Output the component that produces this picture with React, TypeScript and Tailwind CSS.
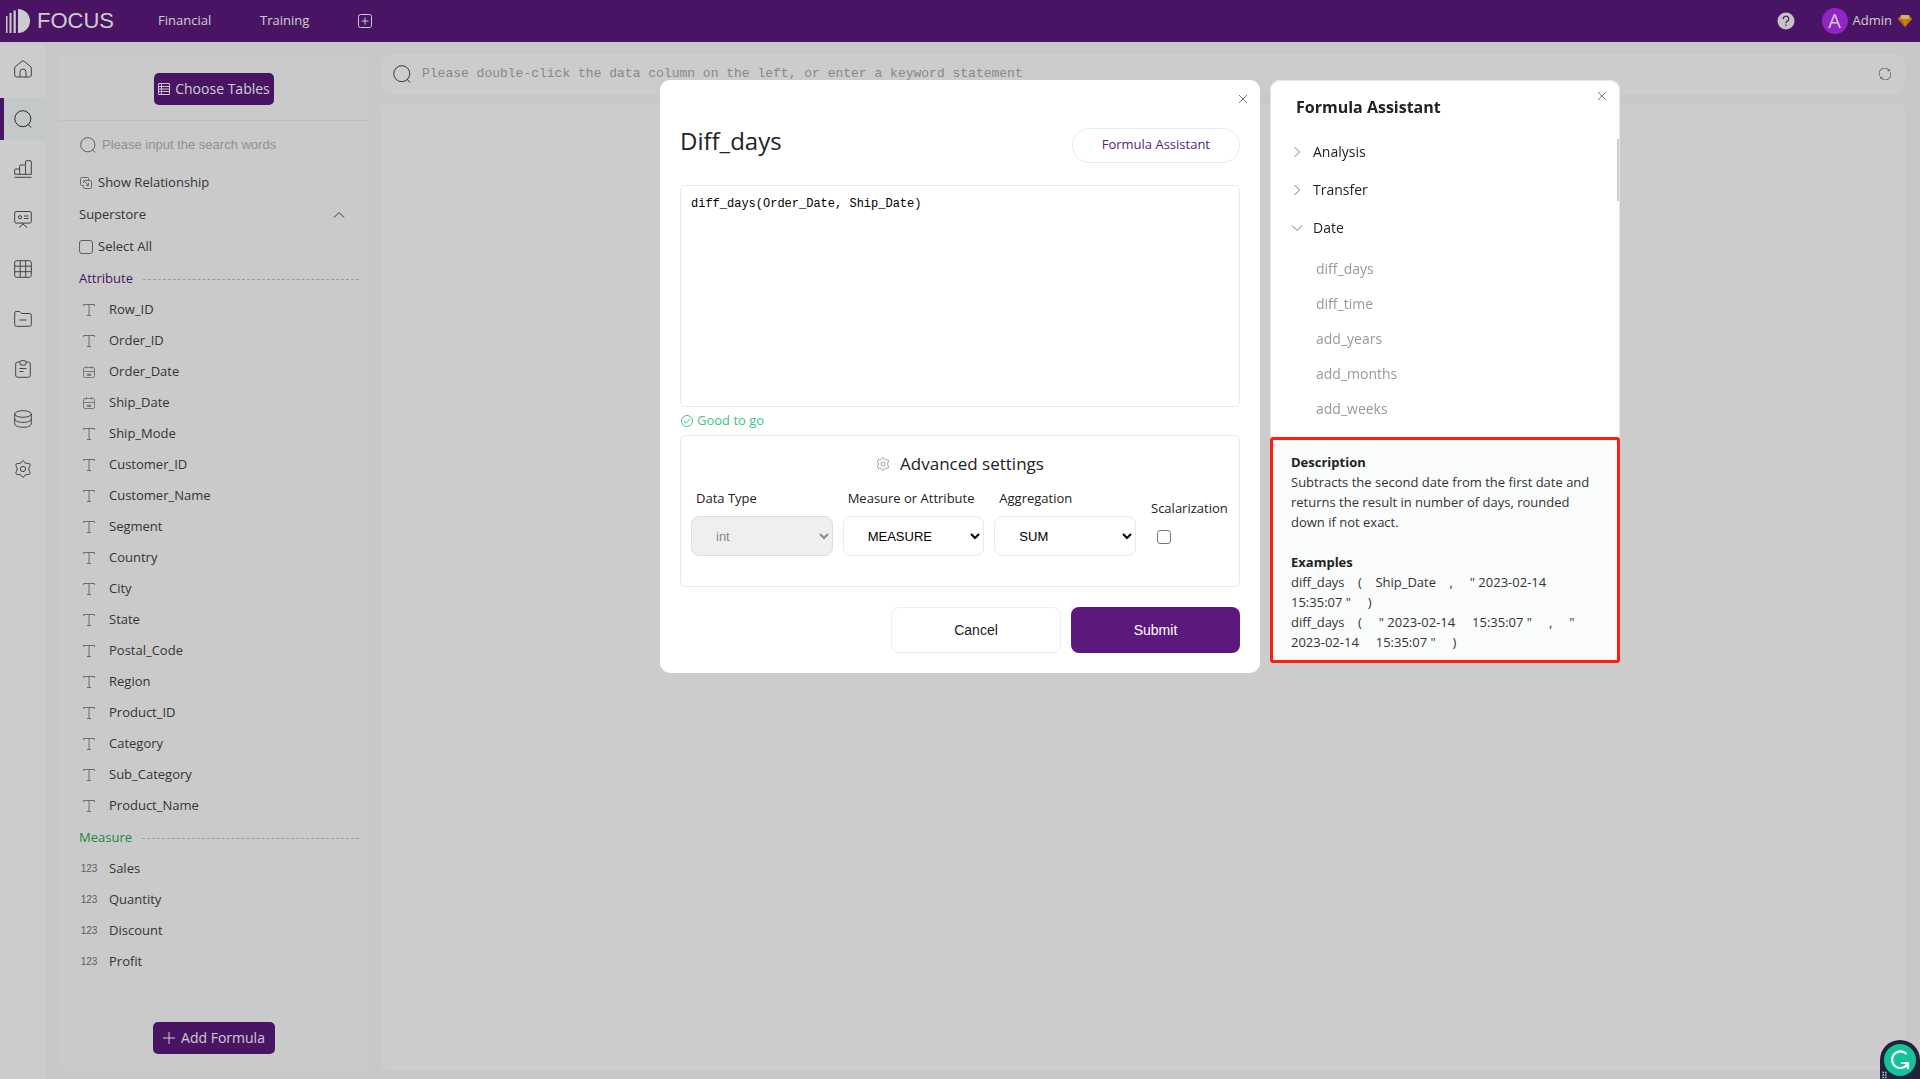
import { useState } from "react";
import clsx from "clsx";

type IconProps = { className?: string };

type Field = { name: string; kind: "text" | "date" | "number" };

const attributes: Field[] = [
  { name: "Row_ID", kind: "text" },
  { name: "Order_ID", kind: "text" },
  { name: "Order_Date", kind: "date" },
  { name: "Ship_Date", kind: "date" },
  { name: "Ship_Mode", kind: "text" },
  { name: "Customer_ID", kind: "text" },
  { name: "Customer_Name", kind: "text" },
  { name: "Segment", kind: "text" },
  { name: "Country", kind: "text" },
  { name: "City", kind: "text" },
  { name: "State", kind: "text" },
  { name: "Postal_Code", kind: "text" },
  { name: "Region", kind: "text" },
  { name: "Product_ID", kind: "text" },
  { name: "Category", kind: "text" },
  { name: "Sub_Category", kind: "text" },
  { name: "Product_Name", kind: "text" },
];

const measures: Field[] = [
  { name: "Sales", kind: "number" },
  { name: "Quantity", kind: "number" },
  { name: "Discount", kind: "number" },
  { name: "Profit", kind: "number" },
];

const dateFunctions = [
  "diff_days",
  "diff_time",
  "add_years",
  "add_months",
  "add_weeks",
];

function Svg({
  className,
  size = 18,
  children,
}: IconProps & { size?: number; children: React.ReactNode }) {
  return (
    <svg
      className={clsx("shrink-0", className)}
      viewBox={`0 0 ${size} ${size}`}
      fill="none"
      stroke="currentColor"
      aria-hidden="true"
    >
      {children}
    </svg>
  );
}

function HomeIcon({ className }: IconProps) {
  return (
    <Svg className={className}>
      <path d="M.7 7.2 8 1.2q1-.8 2 0l7.3 6V15a2 2 0 0 1-2 2H2.700a2 2 0 0 1-2-2z" />
      <path d="M6 17v-5a3 3 0 0 1 6 0v5" />
    </Svg>
  );
}

function SearchIcon({ className }: IconProps) {
  return (
    <Svg className={className}>
      <circle cx="8.800" cy="8.700" r="8" />
      <path d="m13.800 14.200 3.400 3.300" />
    </Svg>
  );
}

function ChartIcon({ className }: IconProps) {
  return (
    <Svg className={className}>
      <path d="M.7 14.300V10q0-1 1-1h4v5.300M5.700 9V6q0-1 1-1h3.800q1 0 1 1v8.300M11.500 5V1.700q0-1 1-1h3.800q1 0 1 1v12.600H.7M.5 17.300h17" />
    </Svg>
  );
}

function BoardIcon({ className }: IconProps) {
  return (
    <Svg className={className}>
      <rect x=".7" y="1.500" width="16.600" height="11.600" rx="1.500" />
      <circle cx="6" cy="7.200" r="1.600" />
      <path d="M10 6h4.500M10 8.500h4.500M9 13v2M9 14l-4 3.500M9 14l4 3.500" />
    </Svg>
  );
}

function GridIcon({ className }: IconProps) {
  return (
    <Svg className={className}>
      <rect x=".7" y=".7" width="16.600" height="16.600" rx="2" />
      <path d="M.7 6.200h16.600M.7 11.700h16.600M6.200.7v16.600M11.700.7v16.600" />
    </Svg>
  );
}

function FolderIcon({ className }: IconProps) {
  return (
    <Svg className={className}>
      <path d="M.7 14.500V3q0-1.500 1.500-1.500h3.500l2 2h7.800q1.800 0 1.800 1.800v9.200q0 1.800-1.800 1.800H2.500q-1.800 0-1.800-1.800zM5.500 10h7" />
    </Svg>
  );
}

function ClipboardIcon({ className }: IconProps) {
  return (
    <Svg className={className}>
      <path d="M6 2H3.700q-2 0-2 2v11.300q0 2 2 2h10.600q2 0 2-2V4q0-2-2-2H12M6 1.500 7 .7h4l1 .8V4q0 1-1 1H7Q6 5 6 4zM5.500 8.500h7M5.500 11.500h4" />
    </Svg>
  );
}

function DatabaseIcon({ className }: IconProps) {
  return (
    <Svg className={className}>
      <ellipse cx="9" cy="4" rx="8.300" ry="3.300" />
      <path d="M.7 4v9.800c0 1.900 3.700 3.500 8.300 3.500s8.300-1.600 8.300-3.500V4M.7 9c0 1.900 3.700 3.400 8.300 3.400s8.300-1.500 8.300-3.400" />
    </Svg>
  );
}

function GearIcon({ className }: IconProps) {
  return (
    <Svg className={className}>
      <path d="M7.500 1.800q1.500-2.200 3 0l.9 1.500 2 .2c2.700-.2 3.400 1 2.200 3.200L14.700 9l.9 2.300c1.200 2.200.5 3.400-2.200 3.200l-2 .2-.9 1.500q-1.500 2.200-3 0l-.9-1.500-2-.2c-2.700.2-3.400-1-2.200-3.200L3.300 9l-.9-2.300c-1.200-2.200-.5-3.400 2.200-3.200l2-.2z" />
      <circle cx="9" cy="9" r="2.600" />
    </Svg>
  );
}

function CloseIcon({ className }: IconProps) {
  return (
    <Svg className={className} size={10}>
      <path d="m1 1 8 8M9 1 1 9" />
    </Svg>
  );
}

function ChevronIcon({ className }: IconProps) {
  return (
    <Svg className={className} size={12}>
      <path d="m3.500 1 5 5-5 5" />
    </Svg>
  );
}

function FieldIcon({ kind }: { kind: Field["kind"] }) {
  if (kind === "number") {
    return (
      <span className="w-5 text-center font-['Liberation_Sans',sans-serif] text-[10px] text-[#777]">
        123
      </span>
    );
  }
  if (kind === "date") {
    return (
      <Svg className="mx-1 size-3 text-[#999]" size={12}>
        <path d="M2 1.500h8q1.500 0 1.500 1.500v7q0 1.500-1.500 1.500H2Q.5 11.500.5 10V3q0-1.500 1.500-1.500zM.5 5.500h11M3.500 0v2.500M8.500 0v2.500M4 7.500l1.200 2 .9-2 .9 2 1.200-2M4 9.500h4" />
      </Svg>
    );
  }
  return (
    <Svg className="mx-1 size-3 text-[#888]" size={12}>
      <path d="M.5 2v-1.500h11V2M6 .5v11M4 11.500h4" />
    </Svg>
  );
}

function Header() {
  return (
    <header className="flex h-[42px] shrink-0 items-center bg-[#5c197d] text-[13px] text-white">
      <a href="#" className="flex w-[158px] items-center gap-[7px] pl-1.5">
        <svg viewBox="0 0 24 24" className="size-6" fill="currentColor">
          <path d="M0 7h1.500v17H0zM3.500 4h2v20h-2zM7.500 1.500h2.300V24H7.500zM12 0a12 12 0 0 1 0 24z" />
        </svg>
        <span className="font-['Liberation_Sans',sans-serif] text-[22px] leading-6">
          FOCUS
        </span>
      </a>
      <nav className="flex flex-1 items-center">
        <a href="#" className="w-[102px]">
          Financial
        </a>
        <a href="#" className="w-[98px]">
          Training
        </a>
        <button type="button" aria-label="Add page">
          <Svg className="size-3.5" size={14}>
            <rect x=".5" y=".5" width="13" height="13" rx="2" />
            <path d="M7 3.500v7M3.500 7h7" />
          </Svg>
        </button>
      </nav>
      <div className="flex items-center pr-2">
        <button type="button" aria-label="Help" className="mr-[27px]">
          <svg viewBox="0 0 18 18" className="size-[18px]" fill="none">
            <circle cx="9" cy="9" r="8.500" fill="#f4f4f4" />
            <path
              d="M6.300 7a2.700 2.700 0 1 1 4 2.300Q9 10 9 11.300M9 12.600v1.400"
              stroke="#5c197d"
              strokeWidth="1.200"
            />
          </svg>
        </button>
        <span className="flex size-[26px] items-center justify-center rounded-full bg-[#b82df5] text-xl leading-none">
          A
        </span>
        <span className="mr-1.5 ml-[5px]">Admin</span>
        <svg viewBox="0 0 14 14" className="size-3.5">
          <path d="M3 1h8l3 4-7 8-7-8z" fill="#f3a712" />
          <path d="M3.500 1h7L11 5H3z" fill="#ffe2a0" />
          <path d="M0 5h4l3 8z" fill="#e07d10" />
          <path d="M14 5h-4l-3 8z" fill="#e99012" />
        </svg>
      </div>
    </header>
  );
}

const sideItems = [
  { label: "Home", Icon: HomeIcon },
  { label: "Search", Icon: SearchIcon },
  { label: "Charts", Icon: ChartIcon },
  { label: "Dashboards", Icon: BoardIcon },
  { label: "Tables", Icon: GridIcon },
  { label: "Resources", Icon: FolderIcon },
  { label: "Tasks", Icon: ClipboardIcon },
  { label: "Data", Icon: DatabaseIcon },
  { label: "Settings", Icon: GearIcon },
];

function SideNav() {
  return (
    <nav className="mt-0.5 flex w-[45px] shrink-0 flex-col bg-white text-[#555]">
      {sideItems.map(({ label, Icon }) => (
        <button
          key={label}
          type="button"
          aria-label={label}
          className={clsx(
            "flex h-[50px] items-center justify-center border-y-4 border-white",
            label === "Search" &&
              "bg-[#f7fafa] text-[#333] shadow-[inset_4px_0_0_#5c197d]",
          )}
        >
          <Icon className="size-[18px]" />
        </button>
      ))}
    </nav>
  );
}

function FieldGroup({
  title,
  fields,
  className,
}: {
  title: string;
  fields: Field[];
  className: string;
}) {
  return (
    <section>
      <div className="flex h-8 items-center gap-2.5 pt-0.5">
        <h3 className={className}>{title}</h3>
        <span className="flex-1 border-t border-dashed border-[#c4c4c4]" />
      </div>
      <ul>
        {fields.map((field) => (
          <li key={field.name} className="flex h-[31px] items-center gap-2.5">
            <FieldIcon kind={field.kind} />
            {field.name}
          </li>
        ))}
      </ul>
    </section>
  );
}

function DataPanel() {
  return (
    <aside className="mt-[15px] mb-[9px] flex w-[310px] shrink-0 flex-col bg-[#fdfdfd] text-[13px] text-[#444]">
      <div className="flex h-16 items-center justify-center border-b border-[#f2f2f2]">
        <button
          type="button"
          className="flex h-8 items-center gap-[5px] rounded-[5px] bg-[#5c197d] px-1 text-sm text-white"
        >
          <Svg className="size-3" size={12}>
            <path d="M.5.5h11v11H.5zM.5 3.500h11M.5 6h11M.5 8.500h11M3.500.5v11" />
          </Svg>
          Choose Tables
        </button>
      </div>
      <div className="flex-1 pt-0.5 pr-2.5 pl-5">
        <label className="flex h-11 items-center gap-1.5 pl-px text-[#666]">
          <SearchIcon className="size-4" />
          <input
            type="text"
            aria-label="Search columns"
            placeholder="Please input the search words"
            className="min-w-0 flex-1 font-['Liberation_Sans',sans-serif] text-[13px] outline-none placeholder:text-[#b5b5b5]"
          />
        </label>
        <button type="button" className="flex h-8 items-center gap-1.5 pl-px">
          <Svg className="size-3 text-[#888]" size={12}>
            <path d="M8.500 3.500V1.500q0-1-1-1h-6q-1 0-1 1v6q0 1 1 1h2M3.500 6V4.500q0-1 1-1h6q1 0 1 1v6q0 1-1 1h-6q-1 0-1-1V8.500M4 4l4.500 4.500M8.500 6v2.500H6" />
          </Svg>
          Show Relationship
        </button>
        <button
          type="button"
          className="flex h-8 w-full items-center justify-between pr-3.5"
        >
          Superstore
          <ChevronIcon className="size-3 -rotate-90" />
        </button>
        <label className="flex h-[31px] items-center gap-[5px]">
          <input
            type="checkbox"
            className="size-3.5 appearance-none rounded-[3px] border border-[#777]"
          />
          Select All
        </label>
        <FieldGroup
          title="Attribute"
          fields={attributes}
          className="text-[#5c197d]"
        />
        <FieldGroup
          title="Measure"
          fields={measures}
          className="text-[#2fa84f]"
        />
      </div>
      <div className="flex justify-center pb-4">
        <button
          type="button"
          className="flex h-8 items-center gap-1.5 rounded-[5px] bg-[#5c197d] px-2.5 text-sm text-white"
        >
          <Svg className="size-3" size={12}>
            <path d="M6 0v12M0 6h12" />
          </Svg>
          Add Formula
        </button>
      </div>
    </aside>
  );
}

function Workspace() {
  return (
    <main className="mt-3 mr-[15px] mb-[9px] flex min-w-0 flex-1 flex-col gap-2.5">
      <div className="flex h-10 items-center gap-[11px] rounded-[10px] bg-white pr-3.5 pl-3 text-[#444]">
        <SearchIcon className="size-[18px]" />
        <input
          type="text"
          aria-label="Keyword statement"
          placeholder="Please double-click the data column on the left, or enter a keyword statement"
          className="flex-1 font-['Liberation_Mono',monospace] text-[13px] outline-none placeholder:text-[#aaa]"
        />
        <button type="button" aria-label="Refresh">
          <Svg className="size-3 text-[#777]" size={12}>
            <path d="M.7 7.500A5.300 5.300 0 0 1 10 2.500M11.300 4.500A5.300 5.300 0 0 1 2 9.500M10.300 1v1.800H8.500M1.700 11V9.200h1.800" />
          </Svg>
        </button>
      </div>
      <div className="flex-1 rounded-md bg-white" />
    </main>
  );
}

function SelectField({
  label,
  options,
  disabled,
}: {
  label: string;
  options: string[];
  disabled?: boolean;
}) {
  return (
    <label className="flex flex-1 flex-col gap-2">
      <span className="pl-[5px] leading-5 whitespace-nowrap">{label}</span>
      <select
        disabled={disabled}
        className="h-10 w-full rounded-lg border border-[#e8e8ee] bg-white pl-5 font-['Liberation_Sans',sans-serif] text-[13px] text-black disabled:border-[#ddd] disabled:bg-[#efefef] disabled:text-[#888]"
      >
        {options.map((option) => (
          <option key={option}>{option}</option>
        ))}
      </select>
    </label>
  );
}

function FormulaDialog() {
  const [formula, setFormula] = useState("diff_days(Order_Date, Ship_Date)");

  return (
    <div
      role="dialog"
      aria-label="Diff_days"
      className="rounded-[10px] bg-white px-5 pt-3.5 pb-5 text-[13px] text-[#222]"
    >
      <div className="-mr-2 flex h-2.5 justify-end text-[#777]">
        <button type="button" aria-label="Close">
          <CloseIcon className="size-2.5" />
        </button>
      </div>
      <div className="mt-[23px] flex items-center justify-between">
        <h1 className="pb-2 text-2xl leading-7">Diff_days</h1>
        <button
          type="button"
          className="h-[35px] rounded-full border border-[#e6eaf4] px-[29px] text-[#5c197d]"
        >
          Formula Assistant
        </button>
      </div>
      <textarea
        aria-label="Formula"
        value={formula}
        onChange={(e) => setFormula(e.target.value)}
        className="mt-[22px] block h-[222px] w-full resize-none rounded-[5px] border border-[#e8eaf2] px-2.5 py-2 font-['Liberation_Mono',monospace] text-xs leading-5 text-black outline-none"
      />
      <p className="flex h-7 items-center gap-1 pl-px text-[#3cc589]">
        <Svg className="size-3" size={12}>
          <circle cx="6" cy="6" r="5.500" />
          <path d="m3 6 2.200 2.200L9.300 4" />
        </Svg>
        Good to go
      </p>
      <section className="h-[152px] rounded-[5px] border border-[#e8eaf2] px-2.5 pt-4">
        <h2 className="flex items-center justify-center gap-2.5 text-[17px] leading-6">
          <GearIcon className="size-3.5 text-[#888]" />
          Advanced settings
        </h2>
        <div className="mt-3 flex gap-2.5">
          <SelectField label="Data Type" options={["int", "double"]} disabled />
          <SelectField
            label="Measure or Attribute"
            options={["MEASURE", "ATTRIBUTE"]}
          />
          <SelectField label="Aggregation" options={["SUM", "AVG", "MAX"]} />
          <label className="flex w-[83px] flex-col gap-3 pt-2.5 pl-[5px]">
            <span className="leading-5">Scalarization</span>
            <input
              type="checkbox"
              className="ml-1.5 size-3.5 appearance-none rounded-[3px] border border-[#777]"
            />
          </label>
        </div>
      </section>
      <div className="mt-5 flex justify-end gap-2.5 font-['Liberation_Sans',sans-serif] text-sm">
        <button
          type="button"
          className="h-[46px] w-[170px] rounded-lg border border-[#eceef5]"
        >
          Cancel
        </button>
        <button
          type="button"
          className="h-[46px] w-[169px] rounded-lg bg-[#5c197d] text-white"
        >
          Submit
        </button>
      </div>
    </div>
  );
}

function AssistantPanel() {
  return (
    <aside className="absolute top-0 left-full ml-2.5 w-[350px] rounded-[10px] bg-white text-[#222]">
      <div className="relative h-[357px] overflow-hidden rounded-t-[10px] border border-b-0 border-[#e6e6e6] pl-5 text-sm">
        <button
          type="button"
          aria-label="Close assistant"
          className="absolute top-2.5 right-3 text-[#777]"
        >
          <CloseIcon className="size-2.5" />
        </button>
        <h2 className="pt-3.5 pl-[5px] text-base leading-6 font-bold">
          Formula Assistant
        </h2>
        <ul className="mt-3.5">
          {["Analysis", "Transfer", "Date"].map((group) => (
            <li key={group}>
              <button
                type="button"
                className="flex h-[38px] items-center gap-2.5"
              >
                <ChevronIcon
                  className={clsx(
                    "size-3 text-[#777]",
                    group === "Date" && "rotate-90",
                  )}
                />
                {group}
              </button>
            </li>
          ))}
        </ul>
        <ul className="mt-1 pl-[25px] text-[#999]">
          {dateFunctions.map((name) => (
            <li key={name} className="h-[35px] leading-[35px]">
              {name}
            </li>
          ))}
        </ul>
        <span className="absolute top-[58px] right-0 h-[62px] w-0.5 bg-[#ccc]" />
      </div>
      <div className="h-[226px] rounded-[3px] border-[3px] border-[#ff1c12] bg-[#fafcfb] px-[18px] py-3 text-[13px] leading-5 text-[#333]">
        <h3 className="font-bold text-[#222]">Description</h3>
        <p>
          Subtracts the second date from the first date and returns the result
          in number of days, rounded down if not exact.
        </p>
        <h3 className="mt-5 font-bold text-[#222]">Examples</h3>
        <p className="whitespace-pre">
          {'diff_days    (    Ship_Date    ,     " 2023-02-14\n15:35:07 "     )'}
        </p>
        <p className="whitespace-pre">
          {
            'diff_days    (     " 2023-02-14     15:35:07 "     ,     "\n2023-02-14     15:35:07 "     )'
          }
        </p>
      </div>
    </aside>
  );
}

function GrammarBadge() {
  return (
    <button
      type="button"
      aria-label="Writing assistant"
      className="fixed right-0 bottom-0 z-20"
    >
      <svg viewBox="0 0 40 39" className="h-[39px] w-10" fill="none">
        <path d="M0 39V20a20 20 0 0 1 40 0v19z" fill="#1f243c" />
        <circle cx="20" cy="20" r="16" fill="#15c39a" />
        <path
          d="M26.500 14a8.300 8.300 0 1 0 1.300 9.500M21 23h7v6"
          stroke="#fff"
          strokeWidth="2.200"
        />
        <path
          d="M2.500 32.500h1.500M5 32.500h1.500M2.500 35h1.500M5 35h1.500M2.500 37.500h1.500M5 37.500h1.500"
          stroke="#c8cad6"
          strokeWidth="1.500"
        />
      </svg>
    </button>
  );
}

export default function App() {
  return (
    <div className="flex h-screen min-h-[1060px] flex-col bg-[#fafafa] font-['Open_Sans',sans-serif]">
      <Header />
      <div className="flex flex-1">
        <SideNav />
        <div className="flex min-w-0 flex-1 gap-3 pl-3.5">
          <DataPanel />
          <Workspace />
        </div>
      </div>
      <div className="fixed inset-0 z-10 flex items-start justify-center bg-black/20 pt-20">
        <div className="relative w-[600px]">
          <FormulaDialog />
          <AssistantPanel />
        </div>
      </div>
      <GrammarBadge />
    </div>
  );
}
